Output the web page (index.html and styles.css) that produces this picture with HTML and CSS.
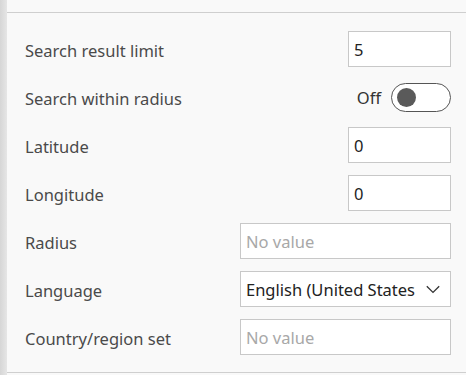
FILE: index.html
```html
<!DOCTYPE html>
<html lang="en">
<head>
  <meta charset="UTF-8" />
  <title>Search settings</title>
  <link rel="stylesheet" href="styles.css">
</head>
<body>
  <div class="panel">
    <div class="panel-edge"></div>
    <div class="panel-body">
      <div class="panel-head"></div>
      <div class="fields">
        <div class="row">
          <label>Search result limit</label>
          <input class="box box-small" type="text" value="5" />
        </div>
        <div class="row">
          <label>Search within radius</label>
          <div class="toggle">
            <span class="toggle-text">Off</span>
            <span class="switch"><span class="knob"></span></span>
          </div>
        </div>
        <div class="row">
          <label>Latitude</label>
          <input class="box box-small" type="text" value="0" />
        </div>
        <div class="row">
          <label>Longitude</label>
          <input class="box box-small" type="text" value="0" />
        </div>
        <div class="row">
          <label>Radius</label>
          <input class="box box-wide" type="text" placeholder="No value" />
        </div>
        <div class="row">
          <label>Language</label>
          <div class="box box-wide dropdown">
            <span class="dropdown-text">English (United States)</span>
            <svg class="chevron" width="14" height="9" viewBox="0 0 14 9">
              <path d="M0.8 1.2 L7 7.4 L13.2 1.2" fill="none" stroke="#333" stroke-width="1.3"/>
            </svg>
          </div>
        </div>
        <div class="row">
          <label>Country/region set</label>
          <input class="box box-wide" type="text" placeholder="No value" />
        </div>
      </div>
    </div>
  </div>
</body>
</html>
```

FILE: styles.css
```css
body {
  margin: 0;
  padding: 0;
  font-family: 'Noto Sans', 'Open Sans', sans-serif;
  color: #333;
  background: #f9f9f9;
}

.panel {
  display: flex;
  height: 375px;
}

.panel-edge {
  width: 7px;
  background: linear-gradient(to right, #d6d6d6, #e6e6e6);
}

.panel-body {
  flex: 1;
}

.panel-head {
  height: 12px;
  border-bottom: 1px solid #cfcfcf;
}

.fields {
  padding: 12px 15px 11px 18px;
  border-bottom: 1px solid #cfcfcf;
}

.row {
  display: flex;
  align-items: center;
  justify-content: space-between;
  height: 48px;
}

.row label {
  font-size: 16.5px;
  color: #4a4a4a;
  padding-top: 3px;
}

.box {
  box-sizing: border-box;
  height: 36px;
  border: 1px solid #c8c8c8;
  background: #fff;
  font-family: 'Noto Sans', 'Open Sans', sans-serif;
  font-size: 16.5px;
  color: #222;
  padding: 0 5px;
  outline: none;
  margin: 0;
}

.box::placeholder {
  color: #a8a8a8;
}

.box-small {
  width: 103px;
}

.box-wide {
  width: 211px;
}

.dropdown {
  display: flex;
  align-items: center;
  gap: 11px;
  padding-right: 10px;
}

.dropdown-text {
  flex: 1;
  min-width: 0;
  white-space: nowrap;
  overflow: hidden;
}

.toggle {
  display: flex;
  align-items: center;
  gap: 10px;
  padding-top: 1px;
}

.toggle-text {
  font-size: 16.5px;
  color: #333;
}

.switch {
  box-sizing: border-box;
  width: 60px;
  height: 29px;
  border: 1.5px solid #555;
  border-radius: 15px;
  background: #fff;
  display: flex;
  align-items: center;
  padding-left: 5px;
}

.knob {
  width: 19px;
  height: 19px;
  border-radius: 50%;
  background: #5a5a5a;
}
```
